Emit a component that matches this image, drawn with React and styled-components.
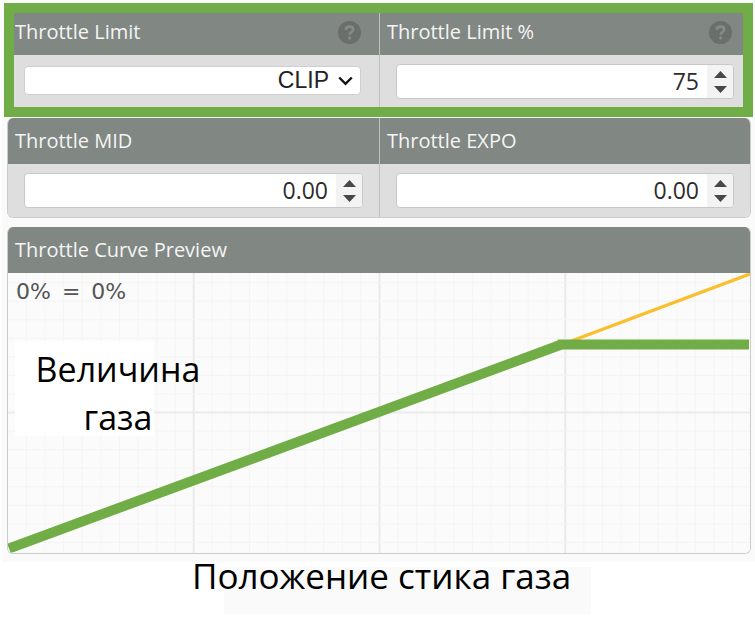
import { useState } from "react";
import styled, { createGlobalStyle } from "styled-components";

const GlobalStyle = createGlobalStyle`
  * {
    box-sizing: border-box;
  }
  body {
    margin: 0;
    background: #fff;
    font-family: "Open Sans", "Noto Sans", sans-serif;
  }
`;

const Page = styled.main`
  padding-left: 2px;
`;

const Panel = styled.div`
  display: flex;
  flex-direction: column;
  gap: 9px;
  padding: 9px 4px 8px 5px;
  background: #fafafa;
`;

const Card = styled.section`
  position: relative;
`;

const CardBox = styled.div`
  display: grid;
  grid-template-columns: ${({ $columns }) => `repeat(${$columns}, 1fr)`};
  border: 1px solid #cbcdcb;
  border-top: none;
  border-radius: 6px;
  overflow: hidden;
`;

/* green frame that lies over the edges of a card */
const Highlight = styled.div`
  position: absolute;
  inset: -6px -2px -8px -3px;
  border: 10px solid #70ad47;
  pointer-events: none;
`;

const Cell = styled.div`
  & + & {
    border-left: 1px solid #bfc1bf;
  }
`;

const CellHead = styled.div`
  display: flex;
  align-items: center;
  justify-content: space-between;
  height: 46px;
  padding: 0 18px 0 7px;
  background: #818783;
  color: #f4f5f4;
  font-size: 20px;
  line-height: 28px;
`;

const Title = styled.h2`
  margin: 0;
  font-size: 20px;
  font-weight: 400;
`;

const HelpButton = styled.button`
  display: flex;
  padding: 0;
  border: none;
  background: none;
  cursor: pointer;
`;

const CellBody = styled.div`
  display: flex;
  align-items: center;
  height: 53px;
  padding: 0 16px;
  background: #dedede;
`;

const SelectWrap = styled.div`
  position: relative;
  flex: 1;
  margin: 0 2px 2px 0;
  svg {
    position: absolute;
    top: 10px;
    right: 8px;
    pointer-events: none;
  }
`;

const Select = styled.select`
  display: block;
  width: 100%;
  height: 29px;
  padding: 0 31px 0 8px;
  border: 1px solid #cfcfcf;
  border-radius: 4px;
  appearance: none;
  background: #fff;
  color: #222;
  font-family: "Liberation Sans", Arial, sans-serif;
  font-size: 23px;
  line-height: 27px;
  text-align-last: right;
`;

const NumberBox = styled.div`
  display: flex;
  flex: 1;
  height: 35px;
  border: 1px solid #c8c8c8;
  border-radius: 4px;
  background: #fff;
  overflow: hidden;
`;

const NumberInput = styled.input`
  flex: 1;
  min-width: 0;
  padding: 0 8px 2px;
  border: none;
  outline: none;
  appearance: textfield;
  background: none;
  color: #2c2c2c;
  font-family: "Open Sans", "Noto Sans", sans-serif;
  font-size: 23px;
  text-align: right;
  &::-webkit-inner-spin-button {
    display: none;
  }
`;

const Spinner = styled.div`
  display: flex;
  flex-direction: column;
  width: 26px;
  background: #f3f3f3;
`;

const SpinButton = styled.button`
  display: flex;
  flex: 1;
  align-items: ${({ $up }) => ($up ? "flex-end" : "flex-start")};
  justify-content: center;
  padding: 4px 0;
  border: none;
  background: none;
`;

const Plot = styled.div`
  position: relative;
  height: 280px;
  background: #fbfbfb;
`;

const Chart = styled.svg`
  display: block;
  width: 100%;
  height: 100%;
  line {
    vector-effect: non-scaling-stroke;
  }
`;

const Readout = styled.div`
  position: absolute;
  top: 5px;
  left: 8px;
  color: #555;
  font-family: "DejaVu Sans", sans-serif;
  font-size: 22px;
  line-height: 28px;
  span {
    margin: 0 4px;
  }
`;

const AxisLabel = styled.div`
  position: absolute;
  top: 68px;
  left: 7px;
  width: 206px;
  height: 95px;
  padding-top: 4px;
  color: #000;
  font-size: 34px;
  line-height: 48px;
  text-align: center;
  background: linear-gradient(#fff, #fff) no-repeat left / 139px 100%;
`;

const Caption = styled.div`
  display: flex;
  justify-content: center;
  padding-left: 26px;
  color: #000;
  font-size: 35px;
  line-height: 48px;
`;

/* the shaded strip starts inside the text and runs past its end */
const CaptionText = styled.p`
  margin: -10px 0 0;
  padding: 0 20px 14px 0;
  white-space: nowrap;
  background: linear-gradient(#fafafa, #fafafa) no-repeat right bottom /
    calc(100% - 32px) 47px;
`;

const HelpIcon = () => (
  <svg width="23" height="23" viewBox="0 0 23 23" aria-hidden="true">
    <circle cx="11.5" cy="11.5" r="11.5" fill="#6a6f6b" />
    <path
      d="M7.8 8.8C8 6.6 9.5 5.6 11.5 5.6c2.1 0 3.7 1.1 3.7 3 0 2.5-3.5 2.5-3.5 5.1"
      fill="none"
      stroke="#858b87"
      strokeWidth="2.7"
    />
    <circle cx="11.7" cy="17" r="1.7" fill="#858b87" />
  </svg>
);

const Heading = ({ id, text, help }) => (
  <CellHead>
    <label htmlFor={id}>{text}</label>
    {help && (
      <HelpButton type="button" aria-label={`${text} help`}>
        <HelpIcon />
      </HelpButton>
    )}
  </CellHead>
);

const NumberField = ({ id, label, initial, step, digits, help }) => {
  const [value, setValue] = useState(initial);
  const change = (delta) =>
    setValue((Math.max(0, Number(value) + delta)).toFixed(digits));

  return (
    <Cell>
      <Heading id={id} text={label} help={help} />
      <CellBody>
        <NumberBox>
          <NumberInput
            id={id}
            type="number"
            step={step}
            value={value}
            onChange={(e) => setValue(e.target.value)}
          />
          <Spinner>
            <SpinButton
              $up
              type="button"
              aria-label="Increase"
              onClick={() => change(step)}
            >
              <svg width="13" height="7" viewBox="0 0 13 7">
                <path d="M0 7L6.5 0L13 7Z" fill="#484848" />
              </svg>
            </SpinButton>
            <SpinButton
              type="button"
              aria-label="Decrease"
              onClick={() => change(-step)}
            >
              <svg width="13" height="7" viewBox="0 0 13 7">
                <path d="M0 0L6.5 7L13 0Z" fill="#484848" />
              </svg>
            </SpinButton>
          </Spinner>
        </NumberBox>
      </CellBody>
    </Cell>
  );
};

const LimitType = () => {
  const [type, setType] = useState("CLIP");
  return (
    <Cell>
      <Heading id="limit-type" text="Throttle Limit" help />
      <CellBody>
        <SelectWrap>
          <Select
            id="limit-type"
            value={type}
            onChange={(e) => setType(e.target.value)}
          >
            <option>OFF</option>
            <option>SCALE</option>
            <option>CLIP</option>
          </Select>
          <svg width="15" height="10" viewBox="0 0 15 10">
            <path
              d="M1.2 1.5L7.5 7.8L13.8 1.5"
              fill="none"
              stroke="#111"
              strokeWidth="2.4"
            />
          </svg>
        </SelectWrap>
      </CellBody>
    </Cell>
  );
};

// 40 x 15 grid, every tenth column is a major line
const columns = Array.from({ length: 39 }, (_, i) => i + 1);
const rows = Array.from({ length: 15 }, (_, i) => i - 7);

const ThrottleCurve = () => (
  <Chart viewBox="0 0 741 280" preserveAspectRatio="none">
    {columns.map((i) => (
      <line
        key={`c${i}`}
        x1={i * 18.55}
        x2={i * 18.55}
        y1="0"
        y2="280"
        stroke={i % 10 ? "#f5f5f5" : "#eaeaea"}
        strokeWidth={i % 10 ? 1 : 2}
      />
    ))}
    {rows.map((i) => (
      <line
        key={`r${i}`}
        x1="0"
        x2="741"
        y1={139.5 + i * 18.55}
        y2={139.5 + i * 18.55}
        stroke={i ? "#f4f4f4" : "#ebebeb"}
        strokeWidth={i ? 1 : 2}
      />
    ))}
    <line x1="552" y1="72" x2="741" y2="1" stroke="#fbbf2d" strokeWidth="3.4" />
    <line x1="1" y1="275.5" x2="552" y2="71.8" stroke="#70ad47" strokeWidth="10" />
    <line x1="549" y1="71.5" x2="740" y2="71.5" stroke="#70ad47" strokeWidth="10" />
  </Chart>
);

const App = () => {
  return (
    <Page>
      <GlobalStyle />
      <Panel>
        <Card>
          <CardBox $columns={2}>
            <LimitType />
            <NumberField
              id="limit-percent"
              label="Throttle Limit %"
              initial="75"
              step={1}
              digits={0}
              help
            />
          </CardBox>
          <Highlight />
        </Card>
        <Card>
          <CardBox $columns={2}>
            <NumberField
              id="mid"
              label="Throttle MID"
              initial="0.00"
              step={0.01}
              digits={2}
            />
            <NumberField
              id="expo"
              label="Throttle EXPO"
              initial="0.00"
              step={0.01}
              digits={2}
            />
          </CardBox>
        </Card>
        <Card>
          <CardBox $columns={1}>
            <CellHead>
              <Title>Throttle Curve Preview</Title>
            </CellHead>
            <Plot>
              <ThrottleCurve />
              <Readout>
                0% <span>=</span> 0%
              </Readout>
              <AxisLabel>
                Величина
                <br />
                газа
              </AxisLabel>
            </Plot>
          </CardBox>
        </Card>
      </Panel>
      <Caption>
        <CaptionText>Положение стика газа</CaptionText>
      </Caption>
    </Page>
  );
};

export default App;
